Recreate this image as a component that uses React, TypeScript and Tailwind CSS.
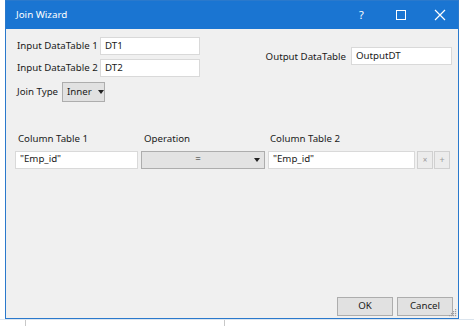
import React from "react";

const font = { fontFamily: '"Noto Sans", "Open Sans", sans-serif' };

function Box({ w, text, className = "" }: { w: string; text: string; className?: string }) {
  return (
    <div className={`h-[18px] bg-white border border-[#d9d9d9] flex items-center px-[4px] text-[9.7px] text-[#1a1a1a] whitespace-nowrap ${w} ${className}`}>
      {text}
    </div>
  );
}

export default function App() {
  return (
    <div className="w-[474px] h-[326px] bg-white flex flex-col overflow-hidden whitespace-nowrap" style={font}>
      <div className="ml-[5px] w-[454px] h-[319px] border border-[#2a79cc] flex flex-col bg-[#f0f0f0] shrink-0">
        <div className="h-[28px] bg-[#1a75d2] text-white flex items-center shrink-0">
          <span className="ml-[10px] text-[9.8px]">Join Wizard</span>
          <div className="ml-auto flex items-center">
            <span className="w-[39px] text-center text-[11px]">?</span>
            <div className="w-[39px] flex justify-center">
              <div className="w-[10px] h-[10px] border border-white" />
            </div>
            <div className="w-[39px] flex justify-center mr-[-1px]">
              <svg width="12" height="12" viewBox="0 0 12 12">
                <path d="M1 1 L11 11 M11 1 L1 11" stroke="white" strokeWidth="1.2" />
              </svg>
            </div>
          </div>
        </div>
        <div className="flex-1 flex flex-col text-[9.7px] text-[#1a1a1a] relative">
          <div className="flex pt-[8px]">
            <div className="flex flex-col gap-[4px] pl-[11px]">
              <div className="flex items-center">
                <span className="w-[83px]">Input DataTable 1</span>
                <Box w="w-[100px]" text="DT1" />
              </div>
              <div className="flex items-center">
                <span className="w-[83px]">Input DataTable 2</span>
                <Box w="w-[100px]" text="DT2" />
              </div>
              <div className="flex items-center mt-[1px]">
                <span className="w-[45px]">Join Type</span>
                <div className="h-[20px] w-[43px] border border-[#adadad] bg-[#e1e1e1] flex items-center pl-[4px]">
                  Inner
                  <svg width="6" height="4" viewBox="0 0 6 4" className="ml-[6px]">
                    <path d="M0 0 L6 0 L3 4 Z" fill="#222" />
                  </svg>
                </div>
              </div>
            </div>
            <div className="ml-auto mr-[6px] mt-[10px] flex items-start">
              <span className="mr-[5px] leading-[19px]">Output DataTable</span>
              <Box w="w-[101px]" text="OutputDT" />
            </div>
          </div>
          <div className="flex mt-[30px] pl-[12px]">
            <span className="w-[126px]">Column Table 1</span>
            <span className="w-[126px]">Operation</span>
            <span>Column Table 2</span>
          </div>
          <div className="flex items-center mt-[4px] pl-[9px]">
            <Box w="w-[123px]" text={'"Emp_id"'} />
            <div className="ml-[3px] h-[18px] w-[124px] border border-[#adadad] bg-[#e3e3e3] flex items-center">
              <span className="flex-1 text-center">=</span>
              <svg width="6" height="4" viewBox="0 0 6 4" className="mr-[4px]">
                <path d="M0 0 L6 0 L3 4 Z" fill="#222" />
              </svg>
            </div>
            <Box w="w-[147px]" text={'"Emp_id"'} className="ml-[3px]" />
            <div className="ml-[2px] h-[18px] w-[16px] border border-[#d0d0d0] bg-[#ececec] flex items-center justify-center text-[8px] text-[#9a9a9a]">×</div>
            <div className="ml-[1px] h-[18px] w-[16px] border border-[#d0d0d0] bg-[#ececec] flex items-center justify-center text-[9px] text-[#9a9a9a]">+</div>
          </div>
          <div className="mt-auto flex justify-end gap-[4px] pr-[5px] pb-[2px]">
            <div className="h-[19px] w-[56px] border border-[#adadad] bg-[#e1e1e1] flex items-center justify-center">OK</div>
            <div className="h-[19px] w-[56px] border border-[#adadad] bg-[#e1e1e1] flex items-center justify-center">Cancel</div>
          </div>
          <svg width="8" height="8" viewBox="0 0 8 8" className="absolute right-[1px] bottom-[1px]">
            <g fill="#9a9aa0">
              <rect x="6" y="0" width="1.2" height="1.2" />
              <rect x="4" y="2" width="1.2" height="1.2" />
              <rect x="6" y="2" width="1.2" height="1.2" />
              <rect x="2" y="4" width="1.2" height="1.2" />
              <rect x="4" y="4" width="1.2" height="1.2" />
              <rect x="6" y="4" width="1.2" height="1.2" />
              <rect x="0" y="6" width="1.2" height="1.2" />
              <rect x="2" y="6" width="1.2" height="1.2" />
              <rect x="4" y="6" width="1.2" height="1.2" />
              <rect x="6" y="6" width="1.2" height="1.2" />
            </g>
          </svg>
        </div>
      </div>
      <div className="flex-1 flex border-t border-[#dde6ef]">
        <div className="w-[25px]" />
        <div className="w-[199px] border-l border-[#c8c8c8]" />
        <div className="border-l border-[#c8c8c8]" />
      </div>
    </div>
  );
}
